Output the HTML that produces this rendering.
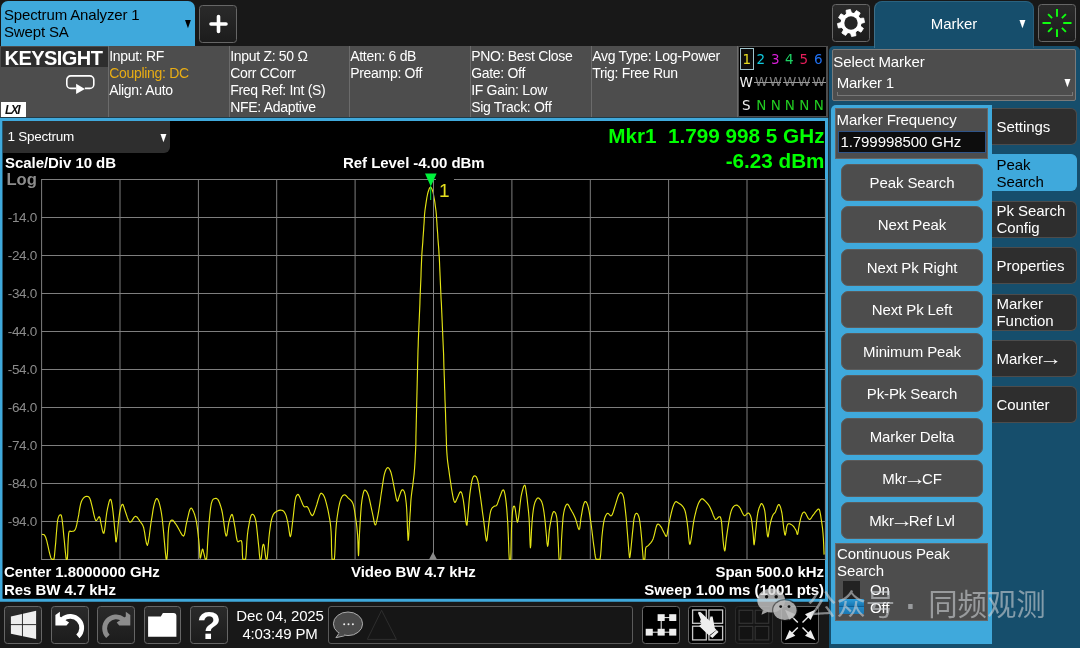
<!DOCTYPE html>
<html><head><meta charset="utf-8"><title>Spectrum Analyzer</title>
<style>
*{margin:0;padding:0;box-sizing:border-box}
html,body{width:1080px;height:648px;overflow:hidden;background:#181818;font-family:"Liberation Sans","Noto Sans CJK SC",sans-serif;color:#fff}
.a{position:absolute}
#tab1{left:1px;top:1px;width:193.600px;height:46px;background:#3fa9dc;border-radius:7px 7px 0 0;color:#000;font-size:15px;line-height:16.4px;padding:6.400px 0 0 3px;letter-spacing:-0.15px}
#tab1 .dd{position:absolute;left:182px;top:15px;font-size:10px;color:#000}
.tbtn{position:absolute;background:linear-gradient(#2a2a2a,#1c1c1c);border:1px solid #666;border-radius:3.5px}
#hdr{left:0;top:46px;width:828px;height:71px;background:#4d4d4d}
#hdr .sep{position:absolute;top:0;width:1px;height:71px;background:#6b6b6b}
#hdr .cell{position:absolute;top:2px;font-size:14px;line-height:17px;white-space:nowrap;color:#fff;letter-spacing:-0.3px}
#ks{left:1px;top:47px;width:107px;height:20px;background:#2e2e2e;font-weight:bold;font-size:20px;line-height:22px;padding-left:3.600px;letter-spacing:-0.55px;overflow:visible}
#lxi{left:1px;top:102px;width:25px;height:15px;background:#fff;color:#111;font-weight:bold;font-style:italic;font-size:12px;line-height:16px;text-align:center;letter-spacing:-1.5px;padding-right:3px}
#trc{left:739px;top:47px;width:86.500px;height:68.500px;background:#000;font-size:13.5px;font-family:"DejaVu Sans","Liberation Sans",sans-serif;overflow:hidden}
#trc .gw{color:#808080;font-size:13px}
#trc span{position:absolute;width:14px;text-align:center;line-height:16px}
#win{left:0;top:117px;width:828px;height:485.500px;background:#000;border:3px solid #3fa9dc}
#specdd{left:3px;top:121px;width:167px;height:32px;background:#2e2e2e;border-radius:0 0 6px 0;font-size:13.5px;line-height:31.600px;padding-left:4.500px;letter-spacing:-0.25px}
.b{font-weight:bold;font-size:15px;white-space:nowrap;letter-spacing:-0.05px;line-height:17px}
.yl{position:absolute;left:0;width:37px;text-align:right;font-size:13.5px;line-height:16px;color:#8c8c8c;letter-spacing:-0.3px}
#mk1{right:255.500px;top:123.600px;font-weight:bold;font-size:20.7px;color:#00ff00;white-space:pre;letter-spacing:0}
#mk2{right:255.500px;top:149px;font-weight:bold;font-size:20.7px;color:#00ff00;white-space:pre;letter-spacing:0}
#rp{left:828.500px;top:46px;width:251px;height:602px;background:#164e6c;border-radius:5px 5px 0 0}
#mtab{left:874px;top:1px;width:160px;height:47px;border-left:1px solid #3f6f88;border-right:1px solid #2a5f7c;background:#164e6c;border-radius:8px 8px 0 0;font-size:15px;text-align:center;line-height:43.600px;padding-right:0px;border-top:1px solid #2a627f}
#selm{left:831.500px;top:49.400px;width:244.500px;height:51.300px;border-radius:2px;background:#4d4d4d;border:1px solid #7a7a7a;font-size:15px;letter-spacing:-0.1px}
#pp{left:830.800px;top:104.500px;width:161.200px;height:539.500px;background:#3fa9dc;border-radius:5px 0 0 0}
#mf{left:835px;top:108px;width:153px;height:51px;background:#4d4d4d;border:1px solid #666;font-size:15px;letter-spacing:-0.1px}
#mfi{left:838px;top:131px;width:148px;height:22px;background:#0d0d0d;border:1px solid #2f5488;font-size:15px;line-height:20px;padding-left:1.500px;letter-spacing:-0.08px}
.pbtn{position:absolute;left:841px;width:142px;height:37px;background:#4d4d4d;border:1px solid #5c5c5c;border-radius:7px;text-align:center;font-size:15px;line-height:35px;letter-spacing:-0.1px}
.stab{position:absolute;left:992px;width:85px;height:37px;background:#2e2e2e;border-radius:0 6px 6px 0;font-size:15px;line-height:17px;display:flex;align-items:center;padding-left:4.500px;letter-spacing:-0.05px;border:1px solid #4c4c4c;border-left:none}
.ar{display:inline-block;transform:scale(1.55,1.25);transform-origin:50% 58%}
.dd2{display:inline-block;transform:scaleY(1.4)}
.stab.act{background:#3fa9dc;color:#000;border-color:#3fa9dc}
#cps{left:835px;top:543px;width:153px;height:78px;background:#4d4d4d;border:1px solid #666;font-size:15px;line-height:17px;padding:1px 0 0 1px;letter-spacing:-0.1px}
#dt{left:230px;top:607px;width:100px;text-align:center;font-size:15px;line-height:18px;letter-spacing:-0.15px}
#msg{left:328.300px;top:606px;width:305px;height:37.800px;border:1px solid #5a5a5a;border-radius:3px;background:#161616}
#wm{left:807px;top:586.400px;font-size:29.4px;color:rgba(205,208,212,.6);white-space:nowrap;letter-spacing:0px;line-height:38px;font-family:"Liberation Sans","Noto Sans CJK SC",sans-serif;font-weight:400}
</style></head><body><div id="root" style="position:absolute;left:0;top:0;width:1080px;height:648px;will-change:transform">
<div class="a" id="tab1">Spectrum Analyzer 1<br>Swept SA<span class="dd dd2">▼</span></div>
<div class="tbtn" style="left:199px;top:5px;width:38px;height:38px"><svg width="36" height="36" viewBox="0 0 36 36"><path d="M18.500 10.500v15M11 18h15" stroke="#fff" stroke-width="3.600" stroke-linecap="round"/></svg></div>
<div class="a" id="hdr">
<div class="sep" style="left:108px"></div><div class="sep" style="left:229px"></div><div class="sep" style="left:349px"></div><div class="sep" style="left:470px"></div><div class="sep" style="left:591px"></div><div class="sep" style="left:737px"></div>
<div class="cell" style="left:109.2px">Input: RF<br><span style="color:#e9ad14">Coupling: DC</span><br>Align: Auto</div>
<div class="cell" style="left:230.2px">Input Z: 50 Ω<br>Corr CCorr<br>Freq Ref: Int (S)<br>NFE: Adaptive</div>
<div class="cell" style="left:350.2px">Atten: 6 dB<br>Preamp: Off</div>
<div class="cell" style="left:471.2px">PNO: Best Close<br>Gate: Off<br>IF Gain: Low<br>Sig Track: Off</div>
<div class="cell" style="left:592.2px">Avg Type: Log-Power<br>Trig: Free Run</div>
</div>
<div class="a" id="ks">KEYSIGHT</div>
<svg class="a" style="left:64px;top:72px" width="32" height="26" viewBox="0 0 32 26"><path d="M12.100 16.400H6.800a4 4 0 0 1-4-4V7.900a4 4 0 0 1 4-4H25.800a4 4 0 0 1 4 4V12.400a4 4 0 0 1-4 4H20.900" fill="none" stroke="#fff" stroke-width="1.600"/><path d="M12.100 11.800L20.900 16.900L12.100 22z" fill="#fff"/></svg>
<div class="a" id="lxi">LXI</div>
<div class="a" id="trc">
<div style="position:absolute;left:0.500px;top:0.500px;width:14px;height:22px;border:1px solid #a0c4cc;background:#0c0c0c"></div>
<span style="left:0.8px;top:4px;color:#e6dc1e">1</span><span style="left:14.9px;top:4px;color:#10c8dc">2</span><span style="left:29.2px;top:4px;color:#d81ed8">3</span><span style="left:43.4px;top:4px;color:#1ed264">4</span><span style="left:57.8px;top:4px;color:#e61e5a">5</span><span style="left:72.2px;top:4px;color:#2070f0">6</span>
<span style="left:0.3px;top:27px;color:#f0f0f0">W</span><span class="gw" style="left:15.4px;top:27px">W</span><span class="gw" style="left:29.7px;top:27px">W</span><span class="gw" style="left:43.9px;top:27px">W</span><span class="gw" style="left:58.3px;top:27px">W</span><span class="gw" style="left:72.7px;top:27px">W</span>
<span style="left:0.3px;top:49.500px;color:#f0f0f0">S</span><span style="left:15.4px;top:49.500px;color:#22cc22">N</span><span style="left:29.7px;top:49.500px;color:#22cc22">N</span><span style="left:43.9px;top:49.500px;color:#22cc22">N</span><span style="left:58.3px;top:49.500px;color:#22cc22">N</span><span style="left:72.7px;top:49.500px;color:#22cc22">N</span>
<div style="position:absolute;left:15px;top:35px;width:27px;height:1px;background:#999"></div><div style="position:absolute;left:44px;top:35px;width:27px;height:1px;background:#999"></div><div style="position:absolute;left:73px;top:35px;width:13.500px;height:1px;background:#999"></div>
</div>
<svg class="a" style="left:0;top:110px" width="830" height="496" viewBox="0 110 830 496"><path d="M0 117.800H828.200V601.700H0zM2.700 121V598.600H824.900V121z" fill="#3fa9dc" fill-rule="evenodd"/><rect x="2.700" y="121" width="822.200" height="477.600" fill="#000"/></svg>
<div class="a" id="specdd">1 Spectrum<span class="dd2" style="position:absolute;left:155.500px;top:1px;font-size:10px">▼</span></div>
<svg class="a" style="left:0;top:0" width="830" height="600" viewBox="0 0 830 600">
<g stroke="#7e7e7e" stroke-width="1"><line x1="41.6" y1="179.5" x2="41.6" y2="559.5"/><line x1="120.0" y1="179.5" x2="120.0" y2="559.5"/><line x1="198.4" y1="179.5" x2="198.4" y2="559.5"/><line x1="276.7" y1="179.5" x2="276.7" y2="559.5"/><line x1="355.1" y1="179.5" x2="355.1" y2="559.5"/><line x1="433.5" y1="179.5" x2="433.5" y2="559.5"/><line x1="511.9" y1="179.5" x2="511.9" y2="559.5"/><line x1="590.3" y1="179.5" x2="590.3" y2="559.5"/><line x1="668.6" y1="179.5" x2="668.6" y2="559.5"/><line x1="747.0" y1="179.5" x2="747.0" y2="559.5"/><line x1="825.4" y1="179.5" x2="825.4" y2="559.5"/><line x1="41.1" y1="179.5" x2="825.9" y2="179.5"/><line x1="41.1" y1="217.5" x2="825.9" y2="217.5"/><line x1="41.1" y1="255.5" x2="825.9" y2="255.5"/><line x1="41.1" y1="293.5" x2="825.9" y2="293.5"/><line x1="41.1" y1="331.5" x2="825.9" y2="331.5"/><line x1="41.1" y1="369.5" x2="825.9" y2="369.5"/><line x1="41.1" y1="407.5" x2="825.9" y2="407.5"/><line x1="41.1" y1="445.5" x2="825.9" y2="445.5"/><line x1="41.1" y1="483.5" x2="825.9" y2="483.5"/><line x1="41.1" y1="521.5" x2="825.9" y2="521.5"/><line x1="41.1" y1="559.5" x2="825.9" y2="559.5"/></g>
<rect x="436" y="178" width="18" height="25" fill="#000"/>
<polyline points="41.9,534.3 42.5,534.4 43.5,534.5 44.5,535.1 45.6,537.0 46.8,540.9 48.0,546.2 49.2,551.6 50.2,555.6 50.8,557.7 51.3,558.6 51.6,559.0 52.0,559.3 52.5,559.3 53.0,559.3 53.4,559.3 53.9,559.3 54.4,556.4 54.8,552.3 55.2,547.6 55.7,542.6 56.1,537.0 56.6,530.8 57.1,524.9 57.6,520.4 58.3,517.6 59.0,515.9 59.7,515.0 60.4,514.8 60.9,514.9 61.3,515.5 61.7,517.2 62.2,520.4 62.9,526.2 63.6,533.9 64.4,541.8 65.0,548.1 65.4,552.3 65.8,555.5 66.0,557.7 66.3,559.3 66.6,559.3 66.8,559.3 67.1,559.3 67.4,558.3 67.7,553.2 67.9,545.8 68.3,538.5 68.7,533.3 69.3,531.2 70.0,531.0 70.7,531.4 71.5,531.5 72.4,531.2 73.4,531.1 74.3,530.7 75.2,529.6 76.0,527.6 76.7,524.9 77.3,521.8 78.0,518.5 78.7,514.9 79.3,510.8 80.0,506.9 80.7,503.7 81.5,501.3 82.4,499.5 83.4,498.2 84.4,497.2 85.5,496.5 86.8,496.3 88.0,496.5 89.1,497.2 89.9,498.6 90.6,500.5 91.2,502.9 91.9,505.6 92.8,509.3 93.7,513.8 94.7,517.9 95.6,520.4 96.6,520.5 97.6,519.0 98.5,517.3 99.3,516.7 99.9,517.7 100.3,519.6 100.6,521.9 101.1,524.1 101.7,527.0 102.4,530.4 103.2,533.0 103.9,533.3 104.6,530.1 105.3,524.6 106.0,518.3 106.7,513.0 107.5,508.7 108.4,504.7 109.2,501.4 110.0,499.6 110.6,499.3 111.1,500.1 111.6,502.2 112.2,505.6 112.9,511.0 113.7,518.3 114.4,525.7 115.0,531.5 115.4,535.5 115.6,538.5 115.7,540.6 115.9,541.7 116.1,542.0 116.3,541.5 116.5,539.9 116.9,537.0 117.5,532.0 118.1,525.3 118.9,518.4 119.6,513.0 120.3,509.4 121.0,506.7 121.7,505.0 122.4,504.3 123.1,504.8 123.7,506.5 124.4,508.7 125.2,511.1 126.2,514.0 127.3,517.4 128.5,520.5 129.8,522.2 131.2,521.7 132.6,519.6 134.0,517.4 135.4,516.3 136.6,516.7 137.8,518.0 138.9,519.7 140.0,521.3 141.0,522.6 141.9,523.8 142.8,525.4 143.7,527.8 144.6,532.4 145.5,538.5 146.5,543.6 147.4,545.4 148.3,542.3 149.3,535.9 150.2,528.5 151.1,522.2 151.9,517.4 152.6,512.9 153.2,508.9 153.9,505.6 154.6,502.9 155.3,500.7 156.0,499.2 156.7,498.5 157.4,498.7 158.0,499.7 158.7,501.4 159.4,503.7 160.1,506.4 160.8,509.6 161.5,513.5 162.2,518.5 162.9,525.3 163.7,533.5 164.4,541.6 165.0,548.1 165.4,552.6 165.8,555.9 166.0,558.1 166.3,559.3 166.6,559.3 166.9,558.8 167.1,556.9 167.4,553.7 167.7,548.2 167.9,540.9 168.2,533.5 168.7,527.8 169.3,524.3 170.1,521.9 170.9,520.6 171.9,520.0 173.0,520.4 174.2,521.8 175.6,523.8 177.0,525.9 178.6,528.7 180.4,532.1 182.1,535.0 183.5,536.1 184.4,534.7 185.1,531.7 185.6,527.8 186.3,524.1 187.2,520.2 188.2,515.9 189.1,512.0 190.0,509.3 190.7,508.2 191.4,508.1 192.1,508.8 192.8,510.2 193.7,512.1 194.7,514.8 195.6,518.1 196.5,522.2 197.3,527.7 198.1,534.2 198.8,540.8 199.3,546.3 199.6,550.6 199.8,554.4 199.9,557.1 200.2,558.3 200.7,557.2 201.3,554.2 201.9,550.9 202.4,549.1 202.8,549.3 203.2,550.5 203.5,552.2 203.9,553.7 204.3,555.2 204.7,556.9 205.0,558.3 205.4,559.3 205.7,559.3 206.0,559.3 206.3,559.3 206.7,558.3 207.1,553.0 207.5,545.5 208.0,537.2 208.5,529.6 209.1,522.4 209.8,515.2 210.5,508.7 211.3,503.7 212.2,500.8 213.1,499.3 214.1,498.8 215.0,498.5 215.9,498.3 216.8,498.6 217.8,499.4 218.7,500.9 219.6,503.0 220.5,505.7 221.5,509.0 222.4,513.0 223.3,518.9 224.3,526.2 225.2,532.7 226.1,536.1 226.9,535.1 227.5,531.1 228.2,526.1 228.9,522.2 229.7,519.4 230.5,516.8 231.3,515.0 232.0,514.4 232.6,515.4 233.2,517.7 233.8,520.8 234.4,524.1 235.1,528.2 235.8,533.0 236.5,537.6 237.2,540.7 237.9,541.8 238.7,541.6 239.4,541.0 240.0,540.7 240.6,540.7 241.1,540.6 241.5,541.0 241.9,542.6 242.2,546.1 242.3,551.1 242.5,556.0 242.8,559.3 243.4,559.3 244.1,559.3 244.9,559.3 245.6,559.3 246.1,554.8 246.5,548.3 246.9,541.3 247.4,535.2 248.0,530.2 248.8,525.6 249.5,521.6 250.2,518.5 250.8,516.3 251.4,515.0 252.0,514.3 252.6,514.3 253.3,514.7 254.1,515.6 254.9,517.4 255.7,520.4 256.5,525.4 257.2,531.8 257.9,538.6 258.5,544.4 259.0,549.1 259.3,553.4 259.7,556.9 260.0,559.3 260.3,559.3 260.7,559.3 261.0,559.3 261.3,558.3 261.6,555.8 261.9,552.3 262.3,548.8 262.6,546.3 263.0,545.0 263.3,544.3 263.7,544.4 264.1,545.4 264.5,548.0 265.0,551.8 265.5,555.7 265.9,558.3 266.2,559.3 266.5,559.3 266.8,559.3 267.2,558.3 267.7,553.2 268.3,545.8 268.9,538.0 269.6,531.5 270.3,526.7 270.9,522.7 271.6,519.4 272.4,516.7 273.2,514.7 274.1,513.4 275.0,512.5 276.1,511.7 277.4,511.0 278.9,510.4 280.4,510.1 281.7,510.2 282.8,510.6 283.7,511.3 284.6,512.4 285.4,513.9 286.2,515.9 286.8,518.4 287.5,521.2 288.1,524.1 288.7,527.8 289.3,532.1 289.8,535.5 290.4,536.7 291.0,534.8 291.6,530.6 292.2,525.4 292.8,520.4 293.4,515.2 294.0,509.5 294.6,504.2 295.2,500.0 295.8,497.3 296.5,495.7 297.2,494.8 297.8,494.4 298.4,494.6 298.9,495.4 299.5,496.6 300.2,498.1 301.0,500.1 302.0,502.5 302.9,504.8 303.9,506.5 304.8,507.0 305.7,506.7 306.6,506.5 307.6,507.0 308.7,509.0 309.9,511.9 311.1,514.5 312.2,515.7 313.2,514.9 314.1,512.8 315.0,510.1 315.9,507.4 316.9,504.4 317.8,501.0 318.8,497.8 319.6,495.4 320.3,494.0 320.8,493.3 321.3,493.2 321.9,493.5 322.6,494.1 323.5,495.2 324.3,496.8 325.2,499.1 326.1,502.3 327.1,506.3 328.1,510.6 328.9,514.8 329.6,518.6 330.2,522.4 330.7,526.5 331.1,531.5 331.4,538.3 331.5,546.4 331.7,554.0 332.0,559.3 332.5,559.3 333.2,559.3 333.8,559.3 334.4,559.3 334.8,553.7 335.2,545.6 335.5,536.9 335.9,529.6 336.4,524.0 336.9,519.2 337.5,515.0 338.1,511.1 338.7,507.5 339.4,504.2 340.1,501.4 340.9,499.1 341.7,497.3 342.5,496.0 343.4,495.2 344.3,494.8 345.2,495.0 346.2,495.8 347.2,496.9 348.3,498.1 349.5,499.1 350.7,500.2 351.9,501.6 353.0,503.7 353.8,506.7 354.5,510.4 355.1,514.5 355.7,518.5 356.3,522.5 356.8,526.5 357.2,530.7 357.6,535.2 357.9,541.0 358.1,547.7 358.3,553.3 358.5,555.6 358.7,553.6 358.9,548.5 359.1,541.9 359.4,535.2 359.8,528.1 360.3,520.0 360.8,512.1 361.3,505.6 361.9,500.7 362.5,496.9 363.1,493.9 363.7,491.7 364.2,490.4 364.8,490.0 365.3,490.2 365.9,490.7 366.5,491.4 367.2,492.4 367.9,494.0 368.7,496.3 369.6,499.8 370.5,504.2 371.5,508.9 372.4,513.0 373.2,516.9 373.9,520.7 374.5,523.7 375.2,525.0 375.9,524.3 376.5,522.2 377.2,518.8 378.0,514.8 378.9,509.6 379.9,503.1 380.8,496.5 381.7,490.7 382.4,485.8 383.1,481.3 383.7,477.4 384.4,474.1 385.2,471.5 386.0,469.5 386.8,468.2 387.6,467.6 388.4,467.8 389.3,468.7 390.1,470.2 390.9,472.2 391.6,474.8 392.3,478.0 393.0,481.6 393.7,485.2 394.5,489.4 395.4,494.1 396.2,498.3 397.0,500.9 397.6,501.2 398.2,500.0 398.7,498.1 399.3,496.3 399.9,494.6 400.6,492.5 401.3,490.8 402.0,489.8 402.7,489.7 403.4,490.3 404.2,491.5 404.8,493.5 405.4,496.2 405.8,499.7 406.3,504.0 406.7,509.3 407.1,517.1 407.4,526.9 407.8,535.6 408.1,540.4 408.4,539.6 408.8,535.1 409.1,529.1 409.4,524.1 409.7,520.5 409.9,517.0 410.1,513.6 410.4,510.2 410.5,506.9 410.7,503.8 410.9,500.4 411.3,496.3 411.9,491.4 412.7,485.8 413.4,480.0 414.1,474.1 414.6,468.0 415.0,461.7 415.3,455.5 415.6,450.0 415.8,445.3 415.9,441.2 415.9,437.3 416.0,433.3 416.1,429.2 416.2,425.0 416.3,420.8 416.4,416.7 416.5,412.5 416.6,408.3 416.7,404.2 416.8,400.0 416.9,395.8 417.0,391.7 417.1,387.5 417.2,383.3 417.3,379.2 417.4,375.0 417.5,370.8 417.6,366.7 417.7,362.5 417.8,358.4 417.9,354.3 418.0,350.0 418.2,345.5 418.3,340.9 418.5,336.2 418.7,331.5 418.9,326.9 419.1,322.3 419.3,317.7 419.5,313.0 419.7,308.4 419.9,303.8 420.0,299.2 420.2,294.6 420.4,289.9 420.6,285.3 420.8,280.7 421.0,276.1 421.1,271.4 421.3,266.7 421.5,262.0 421.7,257.6 421.9,253.5 422.2,249.6 422.5,245.9 422.8,242.1 423.0,238.2 423.3,234.3 423.6,230.4 423.8,226.5 424.1,222.7 424.3,218.9 424.5,215.0 424.9,211.0 425.5,206.6 426.2,201.9 426.9,197.5 427.6,194.0 428.2,191.7 428.7,190.2 429.1,189.1 429.5,188.3 429.8,187.7 430.1,187.4 430.3,187.3 430.5,187.3 430.7,187.3 430.9,187.4 431.2,187.7 431.5,188.3 431.9,189.1 432.4,190.2 432.9,191.7 433.4,194.0 434.0,197.5 434.8,201.9 435.4,206.6 436.0,211.0 436.4,215.0 436.6,218.9 436.9,222.7 437.1,226.5 437.4,230.4 437.7,234.3 437.9,238.2 438.2,242.1 438.5,245.9 438.8,249.6 439.0,253.5 439.3,257.6 439.5,262.0 439.7,266.7 439.9,271.4 440.1,276.1 440.3,280.7 440.5,285.3 440.7,289.9 440.9,294.6 441.1,299.2 441.4,303.8 441.6,308.4 441.8,313.0 442.0,317.7 442.2,322.3 442.4,326.9 442.6,331.5 442.8,336.2 443.0,340.9 443.2,345.5 443.4,350.0 443.6,354.3 443.7,358.4 443.8,362.5 443.9,366.7 444.1,370.8 444.2,375.0 444.4,379.2 444.5,383.3 444.6,387.5 444.8,391.7 444.9,395.8 445.0,400.0 445.2,404.2 445.3,408.3 445.5,412.5 445.6,416.7 445.7,420.8 445.9,425.0 446.0,429.2 446.1,433.3 446.3,437.6 446.4,442.0 446.5,446.2 446.7,450.0 446.9,453.1 447.1,455.8 447.3,458.3 447.6,461.1 448.0,464.1 448.4,467.1 448.9,470.4 449.4,474.1 450.0,478.5 450.8,483.6 451.5,488.5 452.2,492.6 452.8,495.9 453.4,498.8 454.0,500.9 454.6,502.2 455.1,502.4 455.7,501.7 456.2,500.5 456.9,499.1 457.7,497.2 458.7,494.7 459.7,492.5 460.6,491.7 461.3,492.3 462.0,493.8 462.6,496.4 463.3,500.0 464.1,505.9 465.0,513.7 465.8,520.8 466.5,525.0 467.0,525.2 467.3,522.7 467.6,518.9 468.0,514.8 468.4,510.3 468.8,504.9 469.3,499.3 469.8,494.4 470.4,490.0 471.0,486.0 471.6,482.4 472.2,479.6 472.8,477.7 473.5,476.5 474.1,476.0 474.8,475.9 475.5,476.1 476.3,476.8 477.0,478.2 477.8,480.6 478.6,484.3 479.3,489.1 480.1,494.5 480.9,500.0 481.7,505.9 482.5,512.2 483.4,518.5 484.1,524.1 484.8,529.6 485.4,534.9 486.0,539.1 486.5,541.1 487.0,540.0 487.4,536.6 487.8,532.1 488.3,527.8 488.8,523.6 489.4,518.9 490.0,514.5 490.7,511.1 491.5,509.0 492.3,507.8 493.1,507.1 493.9,506.5 494.6,506.1 495.3,506.0 496.0,505.9 496.7,505.2 497.4,503.9 498.0,502.1 498.7,500.1 499.4,498.1 500.3,495.7 501.3,493.0 502.2,490.7 503.1,489.8 503.8,490.3 504.4,491.8 505.0,494.4 505.6,498.1 506.2,503.1 506.8,509.4 507.3,516.5 507.8,524.1 508.2,533.1 508.6,543.3 508.9,552.8 509.3,559.3 509.7,559.3 510.0,559.3 510.4,559.3 510.7,559.3 510.9,553.3 511.1,544.7 511.3,535.5 511.5,527.8 511.8,521.9 512.1,516.8 512.4,512.5 512.8,509.3 513.2,507.2 513.7,506.2 514.2,506.1 514.6,506.5 515.0,507.8 515.4,510.0 515.7,512.5 516.1,514.8 516.4,517.1 516.7,519.5 517.1,521.4 517.4,522.2 517.7,521.7 518.1,520.1 518.5,517.8 518.9,514.8 519.4,510.8 519.9,505.8 520.5,500.7 521.1,496.3 521.9,492.6 522.8,489.1 523.6,486.5 524.4,485.2 525.0,485.3 525.4,486.6 525.8,489.0 526.3,492.6 527.0,497.7 527.7,504.2 528.5,511.4 529.1,518.5 529.5,526.8 529.8,536.2 530.1,544.1 530.4,547.8 530.8,545.4 531.1,538.8 531.5,530.8 531.9,524.1 532.3,519.2 532.7,514.8 533.2,510.8 533.7,507.4 534.3,504.6 535.0,502.2 535.8,500.4 536.5,499.1 537.2,498.3 537.9,497.9 538.6,498.0 539.3,498.5 540.1,499.3 541.0,500.4 541.8,502.1 542.6,504.6 543.3,508.0 544.0,512.3 544.6,517.1 545.2,522.2 545.8,528.7 546.5,536.4 547.0,543.0 547.6,546.3 548.1,544.9 548.5,540.4 548.9,534.6 549.4,529.6 550.0,525.5 550.8,521.4 551.5,517.6 552.2,514.8 552.8,513.0 553.3,511.9 553.8,511.5 554.4,511.7 555.0,512.3 555.7,513.4 556.3,515.4 556.9,518.5 557.3,523.5 557.7,529.9 558.0,536.7 558.3,542.6 558.5,547.7 558.7,552.5 558.9,556.5 559.1,559.3 559.4,559.3 559.8,559.3 560.2,559.3 560.6,559.3 560.9,554.5 561.2,547.6 561.5,540.0 561.9,533.3 562.3,527.6 562.7,522.1 563.1,517.1 563.7,513.0 564.4,509.6 565.2,507.0 566.1,505.1 567.0,504.1 567.9,504.3 568.8,505.6 569.7,507.4 570.7,509.3 571.8,511.3 573.1,513.5 574.3,516.0 575.4,518.5 576.4,521.7 577.4,525.3 578.3,528.3 579.1,529.6 579.7,528.4 580.1,525.5 580.5,521.9 580.9,518.5 581.5,515.2 582.1,511.6 582.7,508.2 583.3,505.6 583.9,503.7 584.4,502.4 585.0,501.6 585.6,501.5 586.2,502.0 586.9,503.1 587.6,504.9 588.3,507.4 589.0,510.7 589.7,514.7 590.4,519.3 591.1,524.1 591.8,529.5 592.5,535.4 593.2,541.3 593.9,546.3 594.5,550.5 594.9,554.2 595.4,557.2 596.1,559.3 597.0,559.3 598.1,559.3 599.1,559.3 600.0,559.3 600.6,555.2 601.1,549.2 601.5,542.7 601.9,537.0 602.4,532.2 602.9,527.8 603.5,523.7 604.1,520.4 604.8,517.7 605.6,515.7 606.5,514.2 607.4,513.3 608.4,513.5 609.4,514.7 610.5,515.8 611.5,515.7 612.5,514.1 613.4,511.5 614.3,508.5 615.2,505.6 616.1,502.6 617.1,499.4 618.0,496.5 618.9,494.4 619.7,493.2 620.4,492.6 621.0,492.6 621.7,493.1 622.3,493.8 622.9,495.0 623.5,496.9 624.1,500.0 624.7,504.7 625.4,510.6 626.1,517.3 626.7,524.1 627.3,531.7 628.0,540.2 628.6,548.1 629.1,553.7 629.4,556.8 629.6,557.7 629.7,557.7 630.0,556.5 630.4,553.6 630.9,549.1 631.4,544.0 631.9,538.9 632.4,533.6 633.0,527.9 633.5,522.6 634.1,518.5 634.7,515.9 635.3,514.3 635.9,513.5 636.5,513.3 637.2,513.6 637.9,514.4 638.6,516.0 639.3,518.5 639.9,522.1 640.5,526.7 641.0,531.8 641.5,537.0 642.0,542.8 642.4,549.3 642.9,555.2 643.3,559.3 643.7,559.3 644.1,559.3 644.5,559.3 644.8,559.3 645.0,557.1 645.2,553.9 645.4,550.6 645.7,548.1 646.2,546.9 646.9,546.5 647.6,546.1 648.5,545.4 649.5,544.2 650.7,542.8 652.0,541.1 653.1,538.9 654.1,535.6 655.1,531.5 656.0,527.6 656.9,525.0 657.8,524.1 658.8,524.3 659.7,525.2 660.6,526.3 661.6,527.7 662.5,529.7 663.5,531.7 664.3,533.3 665.0,534.6 665.6,535.9 666.1,536.5 666.7,536.1 667.2,534.2 667.7,531.2 668.3,527.6 668.9,524.1 669.6,520.4 670.5,516.4 671.4,512.5 672.2,509.3 673.0,506.7 673.8,504.6 674.6,503.0 675.4,501.9 676.1,501.5 676.7,501.7 677.3,502.2 678.1,502.8 679.2,503.5 680.4,504.3 681.7,505.3 682.8,506.5 683.6,507.7 684.4,509.1 685.0,510.7 685.6,513.0 686.2,516.1 686.8,519.8 687.3,523.8 687.8,527.8 688.3,532.3 688.7,537.3 689.2,541.6 689.6,544.1 690.1,544.2 690.5,542.6 691.0,540.0 691.5,537.0 692.0,533.5 692.6,529.2 693.2,524.6 693.9,520.4 694.7,516.4 695.7,512.4 696.6,508.7 697.6,505.6 698.5,503.2 699.5,501.4 700.4,500.0 701.3,499.1 702.0,498.7 702.6,498.7 703.2,499.2 704.1,500.0 705.3,501.1 706.7,502.6 708.2,504.4 709.6,506.5 710.9,509.2 712.2,512.3 713.3,515.4 714.3,517.6 714.9,518.8 715.3,519.4 715.6,519.5 716.1,519.4 716.8,518.9 717.7,517.9 718.6,517.0 719.3,516.7 719.9,516.8 720.4,517.1 720.8,518.2 721.3,520.4 721.8,524.5 722.2,530.1 722.7,535.9 723.1,540.7 723.5,544.5 724.0,547.8 724.4,550.1 724.8,550.9 725.2,549.6 725.5,546.7 725.8,542.9 726.3,538.9 726.9,534.6 727.6,529.6 728.4,524.7 729.1,520.4 729.8,516.9 730.4,514.0 731.1,511.4 731.9,509.3 732.8,507.6 733.7,506.4 734.7,505.6 735.6,505.2 736.5,505.1 737.5,505.4 738.4,506.1 739.3,507.0 740.3,508.5 741.3,510.4 742.2,512.4 743.0,513.9 743.5,514.8 743.9,515.4 744.3,515.7 744.8,515.7 745.6,515.1 746.6,514.1 747.6,513.2 748.5,513.0 749.3,513.6 750.0,514.7 750.7,516.3 751.3,518.5 751.8,521.6 752.3,525.5 752.7,529.6 753.1,533.3 753.4,537.0 753.6,540.8 753.8,543.7 754.1,544.8 754.4,543.3 754.8,540.0 755.2,535.8 755.6,531.5 756.1,527.0 756.6,521.9 757.2,517.0 757.8,513.0 758.5,510.0 759.2,507.7 760.0,505.9 760.6,504.6 761.1,503.8 761.5,503.5 761.9,503.7 762.4,504.3 763.0,505.3 763.6,506.6 764.2,508.5 764.8,511.1 765.3,514.8 765.7,519.3 766.1,523.9 766.5,527.8 766.9,531.1 767.2,534.1 767.6,536.3 768.0,537.0 768.4,535.6 768.8,532.7 769.3,529.1 769.8,525.9 770.4,523.1 771.1,520.3 771.9,517.8 772.6,515.7 773.3,514.4 774.0,513.6 774.7,513.0 775.4,512.0 776.0,510.4 776.7,508.6 777.3,506.8 777.8,505.6 778.3,504.9 778.7,504.5 779.1,504.6 779.6,505.2 780.2,506.4 780.8,508.1 781.3,510.4 781.9,513.0 782.4,516.4 782.8,520.4 783.3,524.5 783.7,527.8 784.1,530.6 784.5,533.0 784.8,534.7 785.2,535.2 785.6,533.9 786.1,531.2 786.5,528.1 787.0,525.9 787.5,524.7 788.0,524.1 788.6,523.8 789.3,523.7 790.1,523.9 791.1,524.4 792.1,525.1 793.0,525.9 793.9,526.9 794.7,528.2 795.5,529.4 796.1,530.6 796.6,531.9 796.9,533.4 797.2,534.4 797.6,534.3 798.0,532.7 798.4,530.1 798.9,527.0 799.4,524.1 800.0,521.3 800.7,518.4 801.5,515.8 802.2,513.9 802.9,512.8 803.5,512.2 804.2,512.1 805.0,512.6 806.0,514.0 807.1,516.2 808.2,518.3 809.3,519.4 810.3,519.1 811.3,517.8 812.3,516.2 813.3,514.8 814.3,513.6 815.3,512.2 816.2,511.1 817.0,510.2 817.7,509.5 818.3,509.1 818.8,509.0 819.3,509.6 819.8,511.0 820.2,513.1 820.7,515.6 821.1,518.5 821.6,521.6 822.1,525.1 822.6,529.0 823.0,533.3 823.4,538.7 823.7,544.9 823.9,550.6 824.1,554.6" fill="none" stroke="#e4e414" stroke-width="1.15" stroke-linejoin="round"/>
<line x1="433.500" y1="179.500" x2="433.500" y2="559.500" stroke="#7e7e7e"/>
<path d="M425 173.500h11.600l-5.800 13z" fill="#00f23c"/><line x1="430.700" y1="186" x2="430.700" y2="200" stroke="#00f23c" stroke-width="1"/>
<path d="M429 559.500l4-7.500 4 7.500z" fill="#8a8a8a"/>
</svg>
<div class="a" style="left:439px;top:180px;font-size:19px;color:#e6e01e;line-height:22px">1</div>
<div class="a b" style="left:5px;top:154px">Scale/Div 10 dB</div>
<div class="a b" style="left:6.500px;top:171px;color:#8c8c8c;font-size:16.600px">Log</div>
<div class="a b" style="left:343px;top:154px">Ref Level -4.00 dBm</div>
<div class="yl" style="top:209.5px">-14.0</div><div class="yl" style="top:247.5px">-24.0</div><div class="yl" style="top:285.5px">-34.0</div><div class="yl" style="top:323.5px">-44.0</div><div class="yl" style="top:361.5px">-54.0</div><div class="yl" style="top:399.5px">-64.0</div><div class="yl" style="top:437.5px">-74.0</div><div class="yl" style="top:475.5px">-84.0</div><div class="yl" style="top:513.5px">-94.0</div>
<div class="a" id="mk1">Mkr1  1.799 998 5 GHz</div>
<div class="a" id="mk2">-6.23 dBm</div>
<div class="a b" style="left:4px;top:563px">Center 1.8000000 GHz</div>
<div class="a b" style="left:4px;top:581px">Res BW 4.7 kHz</div>
<div class="a b" style="left:351px;top:563px">Video BW 4.7 kHz</div>
<div class="a b" style="right:256px;top:563px">Span 500.0 kHz</div>
<div class="a b" style="right:256px;top:581px">Sweep 1.00 ms (1001 pts)</div>

<div class="a" id="rp"></div>
<div class="tbtn" style="left:832px;top:4px;width:38px;height:38px"><svg width="36" height="36" viewBox="-18 -18 36 36"><g fill="#fff"><circle r="10.400"/><path d="M-4.49 -8.82L-4.98 -12.65L-0.59 -13.59L0.52 -9.89L3.06 -9.42L5.42 -12.47L9.19 -10.03L7.36 -6.62L8.82 -4.49L12.65 -4.98L13.59 -0.59L9.89 0.52L9.42 3.06L12.47 5.42L10.03 9.19L6.62 7.36L4.49 8.82L4.98 12.65L0.59 13.59L-0.52 9.89L-3.06 9.42L-5.42 12.47L-9.19 10.03L-7.36 6.62L-8.82 4.49L-12.65 4.98L-13.59 0.59L-9.89 -0.52L-9.42 -3.06L-12.47 -5.42L-10.03 -9.19L-6.62 -7.36z" stroke="#fff" stroke-width="0.800" stroke-linejoin="round"/></g><circle r="6.700" fill="#242424"/></svg></div>
<div class="a" id="mtab">Marker<span class="dd2" style="position:absolute;left:142.500px;font-size:10px">▼</span></div>
<div class="tbtn" style="left:1038px;top:4px;width:38px;height:38px"><svg width="36" height="36" viewBox="-18 -18 36 36"><g stroke="#10ff10" stroke-width="1.900" stroke-linecap="butt"><path d="M0 -6.200V-14M0 6.200V14M-6.200 0H-14.500M6.200 0H14.500M4.900 -4.900L8.900 -8.900M-4.900 -4.900L-8.900 -8.900M4.900 4.900L8.900 8.900M-4.900 4.900L-8.900 8.900"/></g></svg></div>
<div class="a" id="selm"><div style="position:absolute;left:0.800px;top:2.600px;line-height:18px">Select Marker</div><div style="position:absolute;left:4.300px;top:24px;line-height:18px;letter-spacing:-0.27px">Marker 1</div><span class="dd2" style="position:absolute;left:230px;top:27px;font-size:10px;line-height:12px">▼</span><div style="position:absolute;left:4px;top:42px;width:236px;height:4px;border:1px solid #777;border-top:none"></div></div>
<div class="a" id="pp"></div>
<div class="a" id="mf"><div style="position:absolute;left:0.500px;top:2px;line-height:18px">Marker Frequency</div></div>
<div class="a" id="mfi">1.799998500 GHz</div>
<div class="pbtn" style="top:164.0px">Peak Search</div><div class="pbtn" style="top:206.2px">Next Peak</div><div class="pbtn" style="top:248.5px">Next Pk Right</div><div class="pbtn" style="top:290.8px">Next Pk Left</div><div class="pbtn" style="top:333.0px">Minimum Peak</div><div class="pbtn" style="top:375.2px">Pk-Pk Search</div><div class="pbtn" style="top:417.5px">Marker Delta</div><div class="pbtn" style="top:459.8px">Mkr<span class="ar">→</span>CF</div><div class="pbtn" style="top:502.0px">Mkr<span class="ar">→</span>Ref Lvl</div>
<div class="stab" style="top:108.0px"><span>Settings</span></div><div class="stab act" style="top:154.4px"><span>Peak<br>Search</span></div><div class="stab" style="top:200.8px"><span>Pk Search<br>Config</span></div><div class="stab" style="top:247.2px"><span>Properties</span></div><div class="stab" style="top:293.6px"><span>Marker<br>Function</span></div><div class="stab" style="top:340.0px"><span>Marker<span class="ar">→</span></span></div><div class="stab" style="top:386.4px"><span>Counter</span></div>
<div class="a" id="cps">Continuous Peak<br>Search<div style="position:absolute;left:6.800px;top:37.200px;width:17px;height:17.500px;background:#222"></div><div style="position:absolute;left:2.800px;top:54.700px;width:25px;height:15.700px;background:linear-gradient(#2e9cd8 0%,#1676b2 46%,#0f5f94 50%,#2489c6 54%,#1a78b4 100%);border-radius:1px"></div><div style="position:absolute;left:34px;top:37.400px;line-height:17.200px">On<br>Off</div></div>

<div class="tbtn" style="left:4.2px;top:606px;width:37.800px;height:37.800px;"></div>
<div class="tbtn" style="left:50.8px;top:606px;width:37.800px;height:37.800px;"></div>
<div class="tbtn" style="left:97.2px;top:606px;width:37.800px;height:37.800px;"></div>
<div class="tbtn" style="left:143.5px;top:606px;width:37.800px;height:37.800px;"></div>
<div class="tbtn" style="left:190.1px;top:606px;width:37.800px;height:37.800px;"></div>
<div class="a" style="left:190.100px;top:606px;width:37.800px;height:37.800px;font-weight:bold;font-size:39.5px;line-height:38px;text-align:center">?</div>
<div class="a" id="dt">Dec 04, 2025<br>4:03:49 PM</div>
<div class="a" id="msg"></div>
<div class="tbtn" style="left:642.1px;top:606px;width:37.800px;height:37.800px;background:#000"></div>
<div class="tbtn" style="left:688.4px;top:606px;width:37.800px;height:37.800px;background:#000"></div>
<div class="tbtn" style="left:735.1px;top:606px;width:37.800px;height:37.800px;background:#131313;border-color:#2b2b2b"></div>
<div class="tbtn" style="left:781.2px;top:606px;width:37.800px;height:37.800px;background:#000"></div>
<svg class="a" style="left:0;top:600px" width="830" height="48" viewBox="0 600 830 48"><path d="M10.900 616.400L36.100 610.700V639L10.900 633.800z" fill="#eee"/><path d="M22.450 610v30M9.500 624.600H36.100" stroke="#1c1c1c" stroke-width="0.9" fill="none"/><path d="M62.5 619.3A11.5 11.5 0 0 1 77.9 636.4" fill="none" stroke="#fff" stroke-width="4.800"/><polygon points="55.4,615.1 59.9,611.7 59.9,616.4 69.1,622.5 66.5,625.5 55.4,625.5" fill="#fff"/><path d="M123.2 619.3A11.5 11.5 0 0 0 107.9 636.4" fill="none" stroke="#8c8c8c" stroke-width="4.800"/><polygon points="130.3,615.1 125.8,611.7 125.8,616.4 116.7,622.5 119.2,625.5 130.3,625.5" fill="#8c8c8c"/><path d="M148.100 616.400H160.800L162.900 612.900H173.400Q176.400 612.900 176.400 616v20.800H148.100z" fill="#fff"/><path d="M339 633.300L335.900 637.700L344.500 635.800" fill="#4a4a4a" stroke="#aaa" stroke-width="1"/><ellipse cx="348" cy="623.800" rx="14.600" ry="11.800" fill="#4a4a4a" stroke="#aaa" stroke-width="1"/><path d="M339.500 632.800L343.800 635" stroke="#4a4a4a" stroke-width="2"/><g fill="#eee"><circle cx="344.200" cy="624.200" r="1"/><circle cx="348.500" cy="624.200" r="1"/><circle cx="352.900" cy="624.200" r="1"/></g><path d="M381.600 610.300L367.300 639.400H396.400z" fill="none" stroke="#2e2e2e" stroke-width="1"/><g fill="#eee"><rect x="657.6" y="614.2" width="7.100" height="6.800"/><rect x="669.2" y="614.2" width="7.100" height="6.800"/><rect x="645.7" y="628.8" width="7.100" height="6.800"/><rect x="657.6" y="628.8" width="7.100" height="6.800"/><rect x="669.2" y="628.8" width="7.100" height="6.800"/></g><path d="M661.200 617.600H672M661.200 617.600V632.200M649 632.200H672" stroke="#eee" stroke-width="1" fill="none"/><g fill="none" stroke="#c8c8c8" stroke-width="1.300"><rect x="692.6" y="610.0" width="13.7" height="13.3"/><rect x="708.9" y="610.0" width="13.7" height="13.3"/><rect x="692.6" y="626.2" width="13.7" height="13.7"/><rect x="708.9" y="626.2" width="13.7" height="13.7"/></g><polygon points="698.0,612.9 698.7,611.7 700.8,612.3 709.5,620.7 710.4,616.6 712.6,616.6 714.8,628.1 716.5,629.9 709.1,635.5 699.1,625.9 701.7,623.8 700.0,621.6 700.8,619.4" fill="#eee"/><polygon points="709.8,636.1 716.8,630.0 718.5,632.0 712.4,637.9" fill="#eee"/><g fill="none" stroke="#333" stroke-width="1.200"><rect x="739.1" y="610.3" width="13.7" height="13.0"/><rect x="755.2" y="610.3" width="13.5" height="13.0"/><rect x="739.1" y="626.4" width="13.7" height="13.5"/><rect x="755.2" y="626.4" width="13.5" height="13.5"/></g><g fill="#eee"><polygon points="785.0,609.7 795.3,614.2 789.6,619.9"/><path d="M797.8 622.6L792.0 616.7" stroke="#eee" stroke-width="1.400"/><polygon points="815.3,609.7 805.0,614.2 810.7,619.9"/><path d="M802.5 622.6L808.3 616.7" stroke="#eee" stroke-width="1.400"/><polygon points="785.0,640.3 795.3,635.8 789.6,630.1"/><path d="M797.8 627.4L792.0 633.3" stroke="#eee" stroke-width="1.400"/><polygon points="815.3,640.3 805.0,635.8 810.7,630.1"/><path d="M802.5 627.4L808.3 633.3" stroke="#eee" stroke-width="1.400"/></g></svg>
<svg class="a" style="left:750px;top:580px" width="60" height="50" viewBox="750 580 60 50"><g fill="rgba(215,215,215,.74)"><path d="M762.800 610.200L761.500 614.700L767.500 611.900z"/><ellipse cx="771.200" cy="600.400" rx="13.900" ry="12"/></g><ellipse cx="784.900" cy="610.200" rx="12.900" ry="11.100" fill="rgba(30,30,30,.55)"/><g fill="rgba(215,215,215,.74)"><ellipse cx="784.900" cy="610.200" rx="11.700" ry="9.900"/></g><g fill="#111"><circle cx="766.600" cy="596.800" r="1.700"/><circle cx="776.200" cy="596.800" r="1.700"/><circle cx="780.700" cy="606.600" r="1.400"/><circle cx="789" cy="606.600" r="1.400"/></g></svg>
<div class="a" id="wm">公众号<span style="display:inline-block;width:33px;box-sizing:border-box;padding-right:2.600px;text-align:center;font-size:46px;line-height:38px;height:38px;vertical-align:top;position:relative;top:-2.500px;overflow:visible">·</span>同频观测</div>
</div></body></html>
